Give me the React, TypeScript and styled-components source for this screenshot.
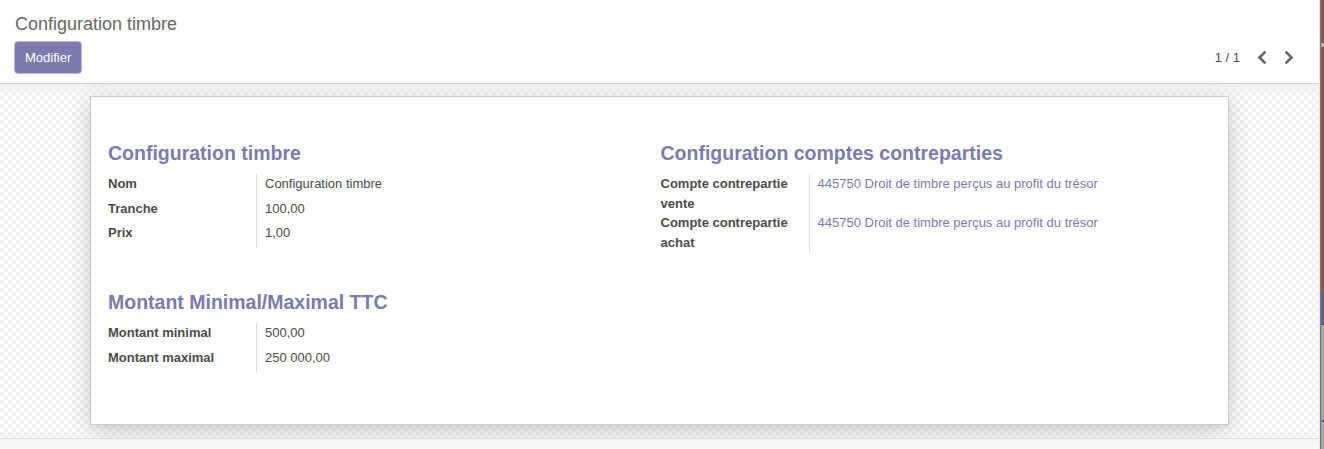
import React from "react";
import styled, { createGlobalStyle } from "styled-components";

const Global = createGlobalStyle`
  html, body { margin: 0; padding: 0; background: #fff; }
  body { font-family: "Liberation Sans", Arial, sans-serif; font-size: 13px; color: #4c4c4c; }
  * { box-sizing: border-box; }
`;

const Screen = styled.div`
  display: flex;
  width: 1324px;
  height: 449px;
  overflow: hidden;
`;

const Main = styled.div`
  flex: 1;
  display: flex;
  flex-direction: column;
  min-width: 0;
  border-right: 1px solid #e6e6e6;
`;

const EdgeStrip = styled.div`
  width: 4px;
  flex: none;
  background: linear-gradient(
    to bottom,
    #8a5b46 0px,
    #8a5b46 43px,
    #b9a49a 43px,
    #b9a49a 47px,
    #8a5b46 47px,
    #8a5b46 293px,
    #5f5e8c 293px,
    #5f5e8c 325px,
    #a3a3a3 325px,
    #a3a3a3 420px,
    #6f6e98 420px,
    #6f6e98 422px,
    #a3a3a3 422px
  );
  box-shadow: inset 1px 0 0 #7a7a7a;
`;

const ControlPanel = styled.div`
  display: flex;
  flex-direction: column;
  padding: 11px 17px 10px 15px;
  border-bottom: 1px solid #cfcfcf;
  background: #fff;
`;

const Breadcrumb = styled.div`
  font-size: 18px;
  line-height: 26px;
  color: #666;
`;

const ButtonRow = styled.div`
  display: flex;
  align-items: center;
  justify-content: space-between;
  margin-top: 5px;
`;

const PrimaryButton = styled.button`
  height: 31px;
  padding: 0 9px;
  font-family: "Liberation Sans", Arial, sans-serif;
  font-size: 13px;
  color: #fff;
  background: #7c7bad;
  border: 1px solid #7c7bad;
  border-radius: 3px;
  box-shadow: 0 0 0 1px #b9b8d6;
  cursor: pointer;
`;

const Pager = styled.div`
  display: flex;
  align-items: center;
`;

const PagerValue = styled.span`
  font-size: 13px;
  color: #4c4c4c;
  margin-right: 8px;
`;

const PagerButton = styled.button`
  width: 27px;
  height: 26px;
  display: flex;
  align-items: center;
  justify-content: center;
  padding: 0;
  border: none;
  background: transparent;
  color: #666;
  cursor: pointer;
`;

const FormArea = styled.div`
  flex: 1;
  padding: 12px 0 13px 90px;
  background-color: #fcfcfc;
  background-image:
    linear-gradient(to bottom, rgba(240, 240, 240, 0.9), rgba(240, 240, 240, 0) 12px),
    repeating-conic-gradient(#f1f1f1 0 25%, #fdfdfd 0 50%);
  background-size: 100% 100%, 8px 8px;
  background-repeat: no-repeat, repeat;
  display: flex;
`;

const Sheet = styled.div`
  width: 1139px;
  background: #fff;
  border: 1px solid #c9c9d4;
  box-shadow: 0 5px 20px -1px rgba(0, 0, 0, 0.22);
  padding: 44px 15px 0 17px;
  display: grid;
  grid-template-columns: 1fr 1fr;
  row-gap: 38px;
  align-content: start;
`;

const Section = styled.div`
  display: flex;
  flex-direction: column;
`;

const SectionTitle = styled.div`
  font-size: 19.5px;
  font-weight: bold;
  line-height: 24px;
  color: #7c7bad;
  margin-bottom: 9px;
`;

const FieldTable = styled.div`
  display: grid;
  grid-template-columns: 148px 1fr;
`;

const Label = styled.div`
  font-weight: bold;
  line-height: 19.5px;
  color: #4c4c4c;
  padding-right: 18px;
`;

const Value = styled.div<{ $link?: boolean }>`
  border-left: 1px solid #dcdcdc;
  padding: 0 0 5px 8px;
  line-height: 19.5px;
  color: ${(p) => (p.$link ? "#7c7bad" : "#4c4c4c")};
`;

const BottomBar = styled.div`
  height: 11px;
  border-top: 1px solid #dedede;
  background: linear-gradient(to bottom, #f6f6f6, #fafafa);
`;

const Chevron = ({ dir }: { dir: "left" | "right" }) => (
  <svg width="10" height="13" viewBox="0 0 10 13">
    <polyline
      points={dir === "left" ? "7.5,1.5 2.5,6.5 7.5,11.5" : "2.5,1.5 7.5,6.5 2.5,11.5"}
      fill="none"
      stroke="currentColor"
      strokeWidth="2.6"
      strokeLinecap="square"
      strokeLinejoin="miter"
    />
  </svg>
);

type Field = { label: string; value: string; link?: boolean };

const FieldGroup = ({ title, fields }: { title: string; fields: Field[] }) => (
  <Section>
    <SectionTitle>{title}</SectionTitle>
    <FieldTable>
      {fields.map((f) => (
        <React.Fragment key={f.label}>
          <Label>{f.label}</Label>
          <Value $link={f.link}>{f.value}</Value>
        </React.Fragment>
      ))}
    </FieldTable>
  </Section>
);

export default function App() {
  return (
    <>
      <Global />
      <Screen>
        <Main>
          <ControlPanel>
            <Breadcrumb>Configuration timbre</Breadcrumb>
            <ButtonRow>
              <PrimaryButton>Modifier</PrimaryButton>
              <Pager>
                <PagerValue>1 / 1</PagerValue>
                <PagerButton aria-label="Précédent">
                  <Chevron dir="left" />
                </PagerButton>
                <PagerButton aria-label="Suivant">
                  <Chevron dir="right" />
                </PagerButton>
              </Pager>
            </ButtonRow>
          </ControlPanel>
          <FormArea>
            <Sheet>
              <FieldGroup
                title="Configuration timbre"
                fields={[
                  { label: "Nom", value: "Configuration timbre" },
                  { label: "Tranche", value: "100,00" },
                  { label: "Prix", value: "1,00" },
                ]}
              />
              <FieldGroup
                title="Configuration comptes contreparties"
                fields={[
                  {
                    label: "Compte contrepartie vente",
                    value: "445750 Droit de timbre perçus au profit du trésor",
                    link: true,
                  },
                  {
                    label: "Compte contrepartie achat",
                    value: "445750 Droit de timbre perçus au profit du trésor",
                    link: true,
                  },
                ]}
              />
              <FieldGroup
                title="Montant Minimal/Maximal TTC"
                fields={[
                  { label: "Montant minimal", value: "500,00" },
                  { label: "Montant maximal", value: "250 000,00" },
                ]}
              />
            </Sheet>
          </FormArea>
          <BottomBar />
        </Main>
        <EdgeStrip />
      </Screen>
    </>
  );
}
